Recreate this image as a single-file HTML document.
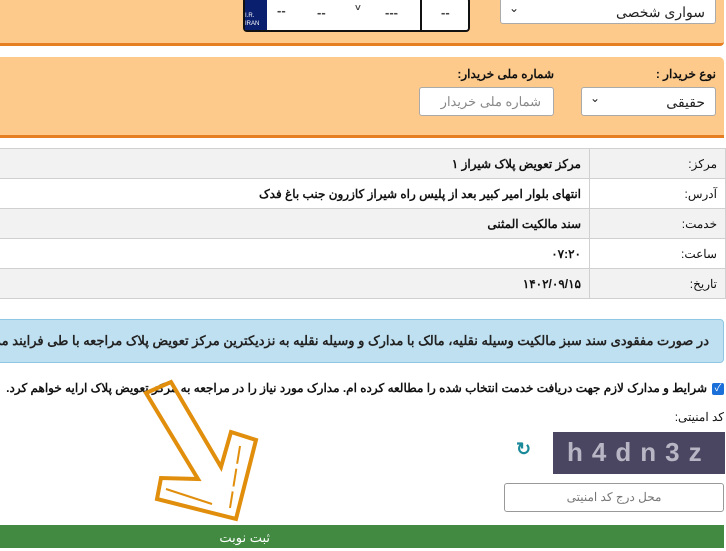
<!DOCTYPE html>
<html><head><meta charset="utf-8"><style>
body{margin:0;width:726px;height:548px;overflow:hidden;background:#fff;font-family:"Liberation Sans","Noto Sans CJK SC",sans-serif;position:relative;direction:rtl}
.a{position:absolute}
.p1{left:0;top:0;width:724px;height:43px;background:#fdca8b;border-bottom:3px solid #e67e22;border-bottom-right-radius:4px}
.p2{left:0;top:57px;width:724px;height:78px;background:#fdca8b;border-bottom:3px solid #e67e22;border-top-right-radius:5px}
.sel{background:#fff;border:1px solid #aaa;border-radius:3px;font-size:14px;color:#222;box-sizing:border-box;padding-right:10px;line-height:26px}
.sel:after{content:"\2304";position:absolute;left:8px;top:-4px;font-size:12px}
.lbl{font-size:12px;font-weight:bold;color:#111}
table{position:absolute;left:-2px;top:148px;width:728px;border-collapse:collapse;font-size:12px}
td{border:1px solid #d0d0d0;height:29px;padding:0 8px;color:#111}
td.k{width:119px}
tr:nth-child(odd) td{background:#f2f2f2}
td.v{font-weight:bold}
</style></head><body>
<div class="a p1"></div>
<div class="a sel" style="left:500px;top:-4px;width:216px;height:28px;line-height:30px">سواری شخصی</div>
<div class="a" style="left:243px;top:-3px;width:227px;height:35px;border:2px solid #111;border-radius:4px;background:#fff;box-sizing:border-box;direction:ltr;font-size:13px;font-weight:bold;color:#444">
 <div class="a" style="left:0;top:0;width:22px;height:31px;background:#0a1f6e;color:#fff;font-size:6px;font-weight:normal;line-height:8px;padding-top:13px;box-sizing:border-box">I.R.<br>IRAN</div>
 <div class="a" style="left:32px;top:4px">--</div>
 <div class="a" style="left:72px;top:6px">--</div>
 <div class="a" style="left:110px;top:4px;font-size:10px">˅</div>
 <div class="a" style="left:140px;top:6px">---</div>
 <div class="a" style="left:175px;top:0;width:2px;height:31px;background:#111"></div>
 <div class="a" style="left:196px;top:6px">--</div>
</div>
<div class="a p2"></div>
<div class="a lbl" style="right:10px;top:67px">نوع خریدار :</div>
<div class="a lbl" style="right:172px;top:67px">شماره ملی خریدار:</div>
<div class="a sel" style="left:581px;top:87px;width:135px;height:29px;line-height:29px">حقیقی</div>
<div class="a" style="left:419px;top:87px;width:135px;height:29px;border:1px solid #aaa;border-radius:3px;background:#fff;box-sizing:border-box;font-size:13px;color:#888;padding-right:12px;line-height:27px">شماره ملی خریدار</div>
<table>
<tr><td class="k">مرکز:</td><td class="v">مرکز تعویض پلاک شیراز ۱</td></tr>
<tr><td class="k">آدرس:</td><td class="v">انتهای بلوار امیر کبیر بعد از پلیس راه شیراز کازرون جنب باغ فدک</td></tr>
<tr><td class="k">خدمت:</td><td class="v">سند مالکیت المثنی</td></tr>
<tr><td class="k">ساعت:</td><td class="v">۰۷:۲۰</td></tr>
<tr><td class="k">تاریخ:</td><td class="v">۱۴۰۲/۰۹/۱۵</td></tr>
</table>
<div class="a" style="left:-4px;top:319px;width:728px;height:44px;background:#bfe0f1;border:1px solid #8fc6e3;border-radius:4px;box-sizing:border-box;font-size:13px;font-weight:bold;color:#222;line-height:42px;padding-right:14px;white-space:nowrap;overflow:hidden">در صورت مفقودی سند سبز مالکیت وسیله نقلیه، مالک با مدارک و وسیله نقلیه به نزدیکترین مرکز تعویض پلاک مراجعه با طی فرایند مربوطه</div>
<div class="a" style="left:712px;top:383px;width:12px;height:12px;background:#1a6fd8;border-radius:2px;color:#fff;font-size:10px;line-height:12px;text-align:center">✓</div>
<div class="a" style="right:19px;top:381px;font-size:12px;font-weight:bold;color:#111;white-space:nowrap">شرایط و مدارک لازم جهت دریافت خدمت انتخاب شده را مطالعه کرده ام. مدارک مورد نیاز را در مراجعه به مرکز تعویض پلاک ارایه خواهم کرد.</div>
<div class="a" style="right:2px;top:410px;font-size:12px;color:#111">کد امنیتی:</div>
<div class="a" style="left:553px;top:432px;width:172px;height:42px;background:#4a4560;direction:ltr;color:#b8b6c4;font-size:26px;font-family:'Liberation Sans',sans-serif;font-weight:bold;letter-spacing:9px;line-height:40px;padding-left:14px;box-sizing:border-box">h4dn3z</div>
<div class="a" style="left:516px;top:439px;font-size:18px;color:#1a8a9a;font-weight:bold">↻</div>
<div class="a" style="left:504px;top:483px;width:220px;height:29px;border:1px solid #999;border-radius:3px;box-sizing:border-box;font-size:12px;color:#777;text-align:center;line-height:27px">محل درج کد امنیتی</div>
<div class="a" style="left:0;top:525px;width:724px;height:23px;background:#428a42;color:#fff;font-size:13px;line-height:26px;text-align:right;padding-right:454px;box-sizing:border-box">ثبت نوبت</div>
<svg class="a" style="left:0;top:0" width="726" height="548"><polygon points="146,393 171,382 221,467 231,432 256,440 236,519 157,499 161,478 198,479" fill="none" stroke="#e08e0b" stroke-width="4" stroke-linejoin="miter"/><line x1="166" y1="489" x2="212" y2="504" stroke="#e08e0b" stroke-width="2"/><line x1="240" y1="446" x2="230" y2="508" stroke="#e08e0b" stroke-width="2" stroke-dasharray="18,5"/></svg>
</body></html>
